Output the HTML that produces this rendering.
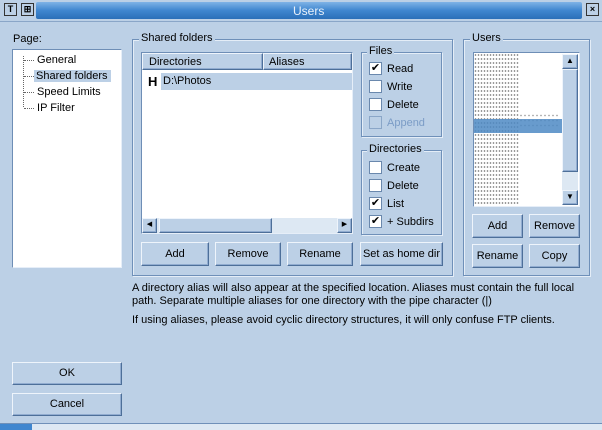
<!DOCTYPE html>
<html><head><style>
*{box-sizing:border-box;margin:0;padding:0}
body{width:602px;height:430px;background:#bcd0e6;font-family:"Liberation Sans",sans-serif;font-size:11px;color:#000;position:relative;overflow:hidden}
.a{position:absolute}
.title{left:0;top:0;width:602px;height:22px;background:#bcd0e6;border-bottom:1px solid #8aa6c8}
.bar{left:36px;top:2px;width:546px;height:17px;background:linear-gradient(#7fb3e6,#3f86cf 50%,#2a6fb8);border-radius:2px}
.tb{width:13px;height:13px;border:1px solid #333;background:#bcd0e6;font-size:9px;font-weight:bold;text-align:center;line-height:11px}
.white{background:#fff;border:1px solid #6e8eb6;border-right-color:#e6eef8;border-bottom-color:#e6eef8}
.grp{border:1px solid #6f90b9;box-shadow:1px 1px 0 #e4edf7 inset,1px 1px 0 #e4edf7}
.lbl{background:#bcd0e6;padding:0 2px;font-size:11px}
.btn{border:1px solid #eef4fb;border-right-color:#4d6f99;border-bottom-color:#4d6f99;box-shadow:-1px -1px 0 #91acd0 inset;text-align:center;font-size:11px;background:#bcd0e6}
.cb{width:13px;height:13px;background:#fff;border:1px solid #6a88ad;font-size:11px;line-height:11px;text-align:center}
.t{white-space:nowrap}
</style></head><body>
<div class="a title"></div>
<div class="a tb" style="left:4px;top:3px">T</div>
<div class="a tb" style="left:21px;top:3px">⊞</div>
<div class="a bar"></div>
<div class="a t" style="left:293px;top:4px;color:#e8f0fa;font-size:12px">Users</div>
<div class="a tb" style="left:586px;top:3px">×</div>

<div class="a t" style="left:13px;top:33px">Page:</div>
<div class="a white" style="left:12px;top:49px;width:110px;height:219px"></div>
<div class="a" style="left:23px;top:56px;height:51px;border-left:1px dotted #666"></div>
<div class="a t" style="left:24px;top:52px;line-height:16px">
<div><span style="border-top:1px dotted #666;display:inline-block;width:10px;vertical-align:middle"></span> General</div>
<div><span style="border-top:1px dotted #666;display:inline-block;width:10px;vertical-align:middle"></span><span style="background:#bcd0e6;padding:0 3px 0 2px">Shared folders</span></div>
<div><span style="border-top:1px dotted #666;display:inline-block;width:10px;vertical-align:middle"></span> Speed Limits</div>
<div><span style="border-top:1px dotted #666;display:inline-block;width:10px;vertical-align:middle"></span> IP Filter</div>
</div>

<div class="a grp" style="left:132px;top:39px;width:321px;height:237px"></div>
<div class="a lbl t" style="left:139px;top:32px">Shared folders</div>
<div class="a white" style="left:141px;top:52px;width:212px;height:182px"></div>
<div class="a btn t" style="left:142px;top:53px;width:121px;height:17px;padding:2px 0 0 6px;text-align:left">Directories</div>
<div class="a btn t" style="left:263px;top:53px;width:89px;height:17px;padding:2px 0 0 5px;text-align:left">Aliases</div>
<div class="a t" style="left:148px;top:74px;font-weight:bold;font-size:13px">H</div>
<div class="a t" style="left:161px;top:73px;width:191px;height:17px;background:#bcd0e6;padding:2px 0 0 2px">D:\Photos</div>
<div class="a" style="left:142px;top:218px;width:210px;height:15px;background:#dde8f3"></div>
<div class="a btn" style="left:142px;top:218px;width:15px;height:15px;font-size:7px;line-height:12px">◀</div>
<div class="a btn" style="left:159px;top:218px;width:113px;height:15px"></div>
<div class="a btn" style="left:337px;top:218px;width:15px;height:15px;font-size:7px;line-height:12px">▶</div>
<div class="a btn" style="left:141px;top:242px;width:68px;height:24px;line-height:22px">Add</div>
<div class="a btn" style="left:215px;top:242px;width:66px;height:24px;line-height:22px">Remove</div>
<div class="a btn" style="left:287px;top:242px;width:66px;height:24px;line-height:22px">Rename</div>
<div class="a btn t" style="left:360px;top:242px;width:83px;height:24px;line-height:22px">Set as home dir</div>

<div class="a grp" style="left:361px;top:52px;width:81px;height:85px"></div>
<div class="a lbl t" style="left:367px;top:45px">Files</div>
<div class="a cb" style="left:369px;top:62px">✔</div><div class="a t" style="left:387px;top:63px">Read</div>
<div class="a cb" style="left:369px;top:80px"></div><div class="a t" style="left:387px;top:81px">Write</div>
<div class="a cb" style="left:369px;top:98px"></div><div class="a t" style="left:387px;top:99px">Delete</div>
<div class="a cb" style="left:369px;top:116px;background:#bcd0e6;border-color:#8aa6c8"></div><div class="a t" style="left:387px;top:117px;color:#7b9cc6">Append</div>

<div class="a grp" style="left:361px;top:150px;width:81px;height:85px"></div>
<div class="a lbl t" style="left:367px;top:143px">Directories</div>
<div class="a cb" style="left:369px;top:161px"></div><div class="a t" style="left:387px;top:162px">Create</div>
<div class="a cb" style="left:369px;top:179px"></div><div class="a t" style="left:387px;top:180px">Delete</div>
<div class="a cb" style="left:369px;top:197px">✔</div><div class="a t" style="left:387px;top:198px">List</div>
<div class="a cb" style="left:369px;top:215px">✔</div><div class="a t" style="left:387px;top:216px">+ Subdirs</div>

<div class="a grp" style="left:463px;top:39px;width:127px;height:237px"></div>
<div class="a lbl t" style="left:470px;top:32px">Users</div>
<div class="a white" style="left:473px;top:52px;width:107px;height:155px;overflow:hidden">
<div class="a" style="left:0;top:0;width:45px;height:153px;background:radial-gradient(circle,#111 0.7px,transparent 0.9px) 0 0/3px 4px;opacity:.55"></div>
<div class="a" style="left:45px;top:60px;width:40px;height:15px;background:radial-gradient(circle,#111 0.7px,transparent 0.9px) 0 0/4px 5px;opacity:.4"></div>
<div class="a" style="left:0;top:66px;width:89px;height:14px;background:#4e8ac4;opacity:.85"></div>
</div>
<div class="a" style="left:562px;top:54px;width:16px;height:151px;background:#dde8f3"></div>
<div class="a btn" style="left:562px;top:54px;width:16px;height:15px;font-size:8px;line-height:12px">▲</div>
<div class="a btn" style="left:562px;top:69px;width:16px;height:103px"></div>
<div class="a btn" style="left:562px;top:190px;width:16px;height:15px;font-size:8px;line-height:12px">▼</div>
<div class="a btn" style="left:472px;top:214px;width:51px;height:24px;line-height:22px">Add</div>
<div class="a btn" style="left:529px;top:214px;width:51px;height:24px;line-height:22px">Remove</div>
<div class="a btn" style="left:472px;top:244px;width:51px;height:24px;line-height:22px">Rename</div>
<div class="a btn" style="left:529px;top:244px;width:51px;height:24px;line-height:22px">Copy</div>

<div class="a t" style="left:132px;top:282px;line-height:13px">A directory alias will also appear at the specified location. Aliases must contain the full local<br>path. Separate multiple aliases for one directory with the pipe character (|)</div>
<div class="a t" style="left:132px;top:314px">If using aliases, please avoid cyclic directory structures, it will only confuse FTP clients.</div>

<div class="a btn" style="left:12px;top:362px;width:110px;height:23px;line-height:21px">OK</div>
<div class="a btn" style="left:12px;top:393px;width:110px;height:23px;line-height:21px">Cancel</div>

<div class="a" style="left:0;top:423px;width:602px;height:7px;background:#dde8f3;border-top:1px solid #6f90b9"></div>
<div class="a" style="left:0;top:424px;width:32px;height:6px;background:#3f86cf"></div>
</body></html>
